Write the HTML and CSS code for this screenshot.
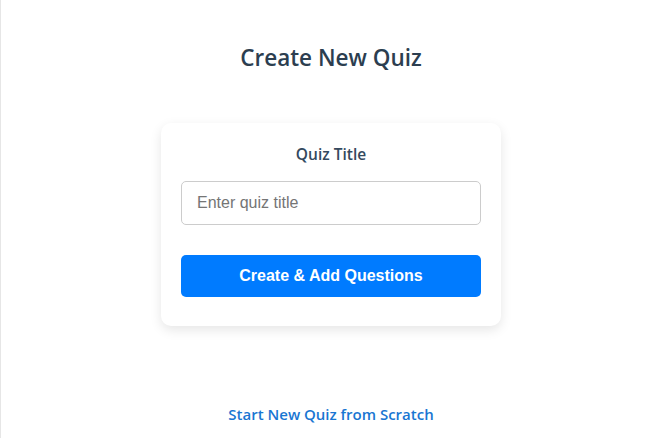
FILE: index.html
```html
<!DOCTYPE html>
<html lang="en">
<head>
<meta charset="utf-8">
<title>Create New Quiz</title>
<link rel="stylesheet" href="styles.css">
</head>
<body>
<main class="page">
  <h1 class="page-title">Create New Quiz</h1>
  <section class="card">
    <label class="field-label" for="quiz-title">Quiz Title</label>
    <input class="text-input" id="quiz-title" type="text" placeholder="Enter quiz title">
    <button class="primary-btn" type="button">Create &amp; Add Questions</button>
  </section>
  <a class="scratch-link" href="#">Start New Quiz from Scratch</a>
</main>
</body>
</html>
```

FILE: styles.css
```css
html, body {
  margin: 0;
  padding: 0;
  background: #ffffff;
  height: 100%;
}

body {
  font-family: "Open Sans", "Noto Sans", sans-serif;
  border-left: 1px solid #e6e6e6;
  box-sizing: border-box;
}

.page {
  display: flex;
  flex-direction: column;
  align-items: center;
  padding: 41px 0 0 6px;
}

.page-title {
  margin: 0;
  font-size: 22.5px;
  font-weight: 600;
  color: #2c3e50;
  line-height: 34px;
}

.card {
  margin-top: 48px;
  width: 340px;
  box-sizing: border-box;
  padding: 20px 20px 29px;
  background: #fff;
  border-radius: 10px;
  box-shadow: 0 4px 12px rgba(0, 0, 0, 0.1);
  display: flex;
  flex-direction: column;
  align-items: stretch;
}

.field-label {
  text-align: center;
  font-size: 15.5px;
  font-weight: 600;
  color: #34495e;
  line-height: 22px;
  margin-bottom: 16px;
}

.text-input {
  height: 44px;
  box-sizing: border-box;
  border: 1px solid #cccccc;
  border-radius: 5px;
  padding: 0 15px;
  font-family: "Liberation Sans", Arial, sans-serif;
  font-size: 16px;
  color: #333;
  outline: none;
}

.text-input::placeholder {
  color: #757575;
}

.primary-btn {
  margin-top: 30px;
  height: 42px;
  border: none;
  border-radius: 5px;
  background: #007bff;
  color: #fff;
  font-family: "Liberation Sans", Arial, sans-serif;
  font-size: 16px;
  font-weight: 700;
  cursor: pointer;
}

.scratch-link {
  margin-top: 77px;
  font-size: 15px;
  font-weight: 600;
  color: #1976d2;
  text-decoration: none;
  line-height: 22px;
}
```
